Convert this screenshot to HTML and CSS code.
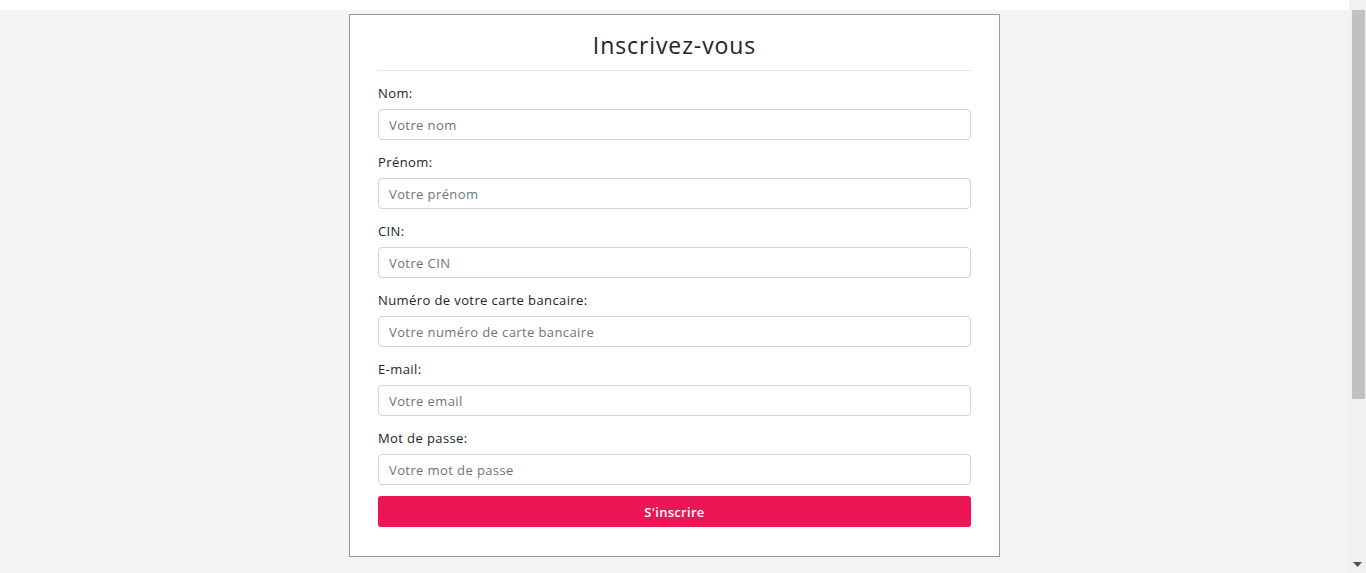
FILE: index.html
```html
<!DOCTYPE html>
<html lang="fr">
<head>
<meta charset="utf-8">
<title>Inscrivez-vous</title>
<link rel="stylesheet" href="styles.css">
</head>
<body>
<div class="page">
  <div class="main">
    <div class="topbar"></div>
    <div class="content">
      <form class="card">
        <h1 class="title">Inscrivez-vous</h1>
        <hr class="sep">
        <div class="group">
          <label class="label">Nom:</label>
          <input class="input" type="text" placeholder="Votre nom">
        </div>
        <div class="group">
          <label class="label">Prénom:</label>
          <input class="input" type="text" placeholder="Votre prénom">
        </div>
        <div class="group">
          <label class="label">CIN:</label>
          <input class="input" type="text" placeholder="Votre CIN">
        </div>
        <div class="group">
          <label class="label">Numéro de votre carte bancaire:</label>
          <input class="input" type="text" placeholder="Votre numéro de carte bancaire">
        </div>
        <div class="group">
          <label class="label">E-mail:</label>
          <input class="input" type="text" placeholder="Votre email">
        </div>
        <div class="group">
          <label class="label">Mot de passe:</label>
          <input class="input" type="password" placeholder="Votre mot de passe">
        </div>
        <button class="btn" type="button">S'inscrire</button>
      </form>
    </div>
  </div>
  <div class="scrollbar">
    <div class="sb-top"></div>
    <div class="sb-thumb"></div>
    <div class="sb-rest"></div>
    <div class="sb-arrow"><svg width="9" height="5" viewBox="0 0 9 5"><path d="M0 0H9L4.5 5Z" fill="#505050"/></svg></div>
  </div>
</div>
</body>
</html>
```

FILE: styles.css
```css
* { box-sizing: border-box; }
html, body { margin: 0; padding: 0; }
body {
  font-family: "Open Sans", "Noto Sans", sans-serif;
  color: #212529;
  background: #f4f4f4;
}
.page {
  display: flex;
  height: 573px;
  overflow: hidden;
}
.main {
  flex: 1;
  display: flex;
  flex-direction: column;
}
.topbar {
  height: 10px;
  background: #ffffff;
}
.content {
  flex: 1;
  background: #f4f4f4;
  padding-top: 4px;
}
.card {
  width: 651px;
  margin: 0 auto;
  background: #fff;
  border: 1px solid #9a9a9a;
  padding: 15px 28px 29px;
  display: flex;
  flex-direction: column;
}
.title {
  margin: 0;
  font-size: 23px;
  font-weight: 400;
  line-height: 30px;
  text-align: center;
  letter-spacing: 0.9px;
  color: #212529;
}
.sep {
  margin: 10px 0 0;
  border: 0;
  border-top: 1px solid #e4e4e4;
  height: 0;
}
.group {
  display: flex;
  flex-direction: column;
  margin-top: 13px;
}
.label {
  font-size: 13px;
  line-height: 18px;
  margin-bottom: 7px;
  color: #212529;
  letter-spacing: 0.4px;
}
.input {
  height: 31px;
  width: 100%;
  border: 1px solid #ced4da;
  border-radius: 4px;
  padding: 0 10px;
  font-family: inherit;
  font-size: 13px;
  letter-spacing: 0.4px;
  color: #495057;
  background: #fff;
}
.input::placeholder { color: #6c757d; opacity: 1; }
.btn {
  margin-top: 11px;
  height: 31px;
  width: 100%;
  border: 0;
  border-radius: 3px;
  background: #ec1556;
  color: #fff;
  font-family: inherit;
  font-size: 13px;
  font-weight: 600;
  letter-spacing: 0.3px;
}
.scrollbar {
  width: 17px;
  background: #f1f1f1;
  display: flex;
  flex-direction: column;
  align-items: center;
}
.sb-top { height: 10px; }
.sb-thumb {
  width: 13px;
  height: 389px;
  background: #c1c1c1;
  margin-left: 1px;
}
.sb-rest { flex: 1; }
.sb-arrow {
  height: 17px;
  display: flex;
  align-items: center;
  justify-content: center;
}
```
